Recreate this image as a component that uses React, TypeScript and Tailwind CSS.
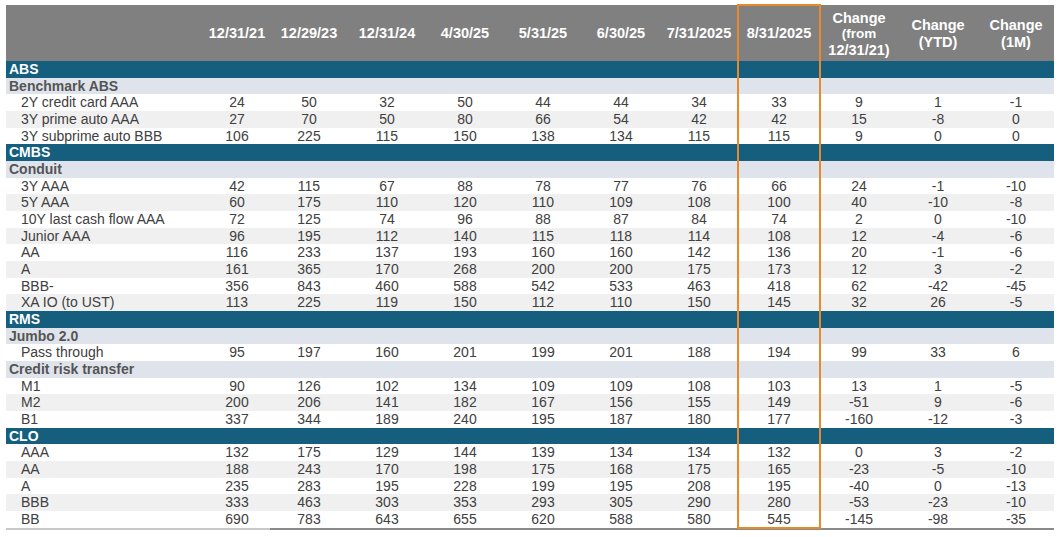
import React from "react";

type Row =
  | { kind: "section"; label: string }
  | { kind: "sub"; label: string }
  | { kind: "data"; label: string; values: string[]; stripe: boolean };

const raw: (string | [string, string])[] = [];

const groups: { section?: string; sub?: string; rows: [string, string][] }[] = [];

const build = (): Row[] => {
  const out: Row[] = [];
  const sec = (label: string) => out.push({ kind: "section", label });
  const sub = (label: string) => out.push({ kind: "sub", label });
  const data = (items: [string, string][]) => {
    items.forEach(([label, v], i) =>
      out.push({ kind: "data", label, values: v.split(" "), stripe: i % 2 === 1 })
    );
  };
  sec("ABS");
  sub("Benchmark ABS");
  data([
    ["2Y credit card AAA", "24 50 32 50 44 44 34 33 9 1 -1"],
    ["3Y prime auto AAA", "27 70 50 80 66 54 42 42 15 -8 0"],
    ["3Y subprime auto BBB", "106 225 115 150 138 134 115 115 9 0 0"],
  ]);
  sec("CMBS");
  sub("Conduit");
  data([
    ["3Y AAA", "42 115 67 88 78 77 76 66 24 -1 -10"],
    ["5Y AAA", "60 175 110 120 110 109 108 100 40 -10 -8"],
    ["10Y last cash flow AAA", "72 125 74 96 88 87 84 74 2 0 -10"],
    ["Junior AAA", "96 195 112 140 115 118 114 108 12 -4 -6"],
    ["AA", "116 233 137 193 160 160 142 136 20 -1 -6"],
    ["A", "161 365 170 268 200 200 175 173 12 3 -2"],
    ["BBB-", "356 843 460 588 542 533 463 418 62 -42 -45"],
    ["XA IO (to UST)", "113 225 119 150 112 110 150 145 32 26 -5"],
  ]);
  sec("RMS");
  sub("Jumbo 2.0");
  data([["Pass through", "95 197 160 201 199 201 188 194 99 33 6"]]);
  sub("Credit risk transfer");
  data([
    ["M1", "90 126 102 134 109 109 108 103 13 1 -5"],
    ["M2", "200 206 141 182 167 156 155 149 -51 9 -6"],
    ["B1", "337 344 189 240 195 187 180 177 -160 -12 -3"],
  ]);
  sec("CLO");
  data([
    ["AAA", "132 175 129 144 139 134 134 132 0 3 -2"],
    ["AA", "188 243 170 198 175 168 175 165 -23 -5 -10"],
    ["A", "235 283 195 228 199 195 208 195 -40 0 -13"],
    ["BBB", "333 463 303 353 293 305 290 280 -53 -23 -10"],
    ["BB", "690 783 643 655 620 588 580 545 -145 -98 -35"],
  ]);
  return out;
};

const rows = build();
void raw;
void groups;

const gridCols =
  "grid grid-cols-[198px_66px_78px_78px_78px_78px_78px_78px_82px_78px_80px_76px]";

const dates = [
  "12/31/21",
  "12/29/23",
  "12/31/24",
  "4/30/25",
  "5/31/25",
  "6/30/25",
  "7/31/2025",
  "8/31/2025",
];

export default function App() {
  return (
    <div
      className="w-[1060px] h-[537px] bg-white pt-[5px] pl-[6px] overflow-hidden"
      style={{ fontFamily: '"Liberation Sans", Arial, sans-serif' }}
    >
      <div className="relative w-[1048px]">
        {/* Header */}
        <div className={`${gridCols} h-[56px] bg-[#808080] text-white font-bold text-[14.5px]`}>
          <div />
          {dates.map((d) => (
            <div key={d} className="flex items-center justify-center pt-[2px]">
              {d}
            </div>
          ))}
          <div className="flex flex-col items-center justify-center leading-[16px] pt-[1px]">
            <span>Change</span>
            <span className="text-[13.5px]">(from</span>
            <span>12/31/21)</span>
          </div>
          <div className="flex flex-col items-center justify-center leading-[17px] pt-[1px]">
            <span>Change</span>
            <span>(YTD)</span>
          </div>
          <div className="flex flex-col items-center justify-center leading-[17px] pt-[1px]">
            <span>Change</span>
            <span>(1M)</span>
          </div>
        </div>

        {/* Body */}
        {rows.map((r, i) => {
          if (r.kind === "section") {
            return (
              <div
                key={i}
                className="h-[16.68px] bg-[#165e7e] text-white font-bold text-[14px] leading-[16.68px] pl-[3px]"
              >
                {r.label}
              </div>
            );
          }
          if (r.kind === "sub") {
            return (
              <div
                key={i}
                className="h-[16.68px] bg-[#dfe3eb] text-[#555555] font-bold text-[14px] leading-[16.68px] pl-[3px]"
              >
                {r.label}
              </div>
            );
          }
          return (
            <div
              key={i}
              className={`${gridCols} h-[16.68px] text-[14px] leading-[16.68px] text-[#404040] ${
                r.stripe ? "bg-[#f0f0f0]" : "bg-white"
              }`}
            >
              <div className="pl-[15px] whitespace-nowrap">{r.label}</div>
              {r.values.map((v, j) => (
                <div key={j} className="text-center">
                  {v}
                </div>
              ))}
            </div>
          );
        })}

        {/* Bottom rule */}
        <div className="flex h-[2px]">
          <div className="w-[264px] bg-[#c8c8c8]" />
          <div className="flex-1 bg-[#8a8a8a]" />
        </div>

        {/* Highlight box over 8/31/2025 column */}
        <div className="absolute left-[731px] top-[-1px] w-[84px] h-[525px] border-2 border-[#e8892b] pointer-events-none" />
      </div>
    </div>
  );
}
